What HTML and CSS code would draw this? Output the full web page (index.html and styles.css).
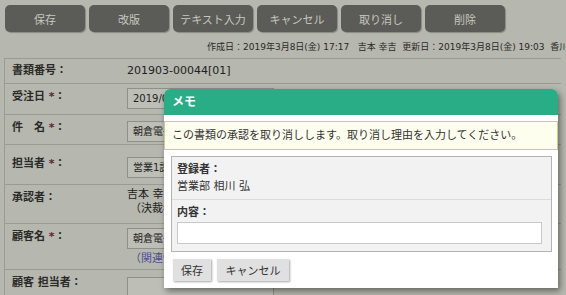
FILE: index.html
```html
<!DOCTYPE html>
<html lang="ja">
<head>
  <meta charset="UTF-8">
  <title>書類編集</title>
  <link rel="stylesheet" href="styles.css">
</head>
<body>
  <div class="toolbar">
    <button class="tool-btn">保存</button>
    <button class="tool-btn">改版</button>
    <button class="tool-btn">テキスト入力</button>
    <button class="tool-btn">キャンセル</button>
    <button class="tool-btn">取り消し</button>
    <button class="tool-btn">削除</button>
  </div>
  <div class="meta">作成日：2019年3月8日(金) 17:17&nbsp;&nbsp;&nbsp;吉本 幸吉&nbsp;&nbsp;更新日：2019年3月8日(金) 19:03&nbsp;&nbsp;香川 和夫</div>

  <div class="doc-table">
    <div class="row r1">
      <div class="label">書類番号：</div>
      <div class="value">201903-00044[01]</div>
    </div>
    <div class="row r2">
      <div class="label">受注日 <span class="req">*</span>：</div>
      <div class="value"><div class="field">2019/03/08</div></div>
    </div>
    <div class="row r3">
      <div class="label">件　名 <span class="req">*</span>：</div>
      <div class="value"><div class="field wide">朝倉電子工業株式会社 様 見積</div></div>
    </div>
    <div class="row r4">
      <div class="label">担当者 <span class="req">*</span>：</div>
      <div class="value"><div class="field">営業1課 香川 和夫</div></div>
    </div>
    <div class="row r5">
      <div class="label">承認者：</div>
      <div class="value">
        <div>吉本 幸吉</div>
        <div class="sub">（決裁者：吉本 幸吉）</div>
      </div>
    </div>
    <div class="row r6">
      <div class="label">顧客名 <span class="req">*</span>：</div>
      <div class="value">
        <div class="field wide">朝倉電子工業株式会社</div>
        <div class="sub link">（関連情報を表示）</div>
      </div>
    </div>
    <div class="row r7">
      <div class="label">顧客 担当者：</div>
      <div class="value"><div class="field"></div></div>
    </div>
  </div>

  <div class="modal">
    <div class="modal-head">メモ</div>
    <div class="notice">この書類の承認を取り消しします。取り消し理由を入力してください。</div>
    <div class="memo-box">
      <div class="memo-sec">
        <div class="memo-label">登録者：</div>
        <div>営業部 相川 弘</div>
      </div>
      <div class="memo-sec">
        <div class="memo-label">内容：</div>
        <input class="memo-input" type="text">
      </div>
    </div>
    <div class="modal-btns">
      <button class="btn">保存</button>
      <button class="btn">キャンセル</button>
    </div>
  </div>
</body>
</html>
```

FILE: styles.css
```css
body { margin: 0; background: #b6b7ae; font-family: "DejaVu Sans", "Noto Sans CJK JP", sans-serif; font-size: 11px; color: #222; overflow: hidden; height: 295px; position: relative; }

.toolbar { display: flex; gap: 4px; padding: 5px 0 0 5px; }
.tool-btn { width: 80px; height: 27px; border: none; border-radius: 5px; background: #5b5c57; color: #c6c7bf; font-family: inherit; font-size: 11px; box-shadow: 1px 1px 1px rgba(0,0,0,.25); padding: 0; }

.meta { margin: 8px 0 4px; padding-left: 207px; font-size: 9px; line-height: 14px; white-space: nowrap; overflow: hidden; color: #2a2a28; }

.doc-table { margin-left: 4px; margin-right: 5px; border-top: 1px solid #9a9b94; border-left: 1px solid #9a9b94; }
.row { display: grid; grid-template-columns: 122px 1fr; border-bottom: 1px solid #9a9b94; }
.label { padding: 4px 0 0 7px; line-height: 17px; font-weight: bold; color: #2a2a28; }
.req { color: #5a2436; }
.value { line-height: 17px; }
.field { width: 140px; height: 19px; border: 1px solid #8f908a; background: #bdbeb6; padding-left: 5px; line-height: 19px; font-size: 10px; overflow: hidden; white-space: nowrap; }
.sub { padding-left: 3px; }
.link { color: #4d4f93; }

.r1 { height: 24px; }
.r1 .label, .r1 .value { padding-top: 3px; }
.r2 { height: 30px; }
.r2 .value { padding-top: 4px; }
.r3 { height: 29px; }
.r3 .value { padding-top: 6px; }
.r4 { height: 39px; }
.r4 .label { padding-top: 10px; }
.r4 .value { padding-top: 12px; }
.r5 { height: 38px; }
.r5 .value { padding-top: 3px; line-height: 14px; }
.r6 { height: 45px; }
.r6 .value { padding-top: 4px; }
.r6 .sub { margin-top: 1px; }
.r7 { height: 25px; overflow: hidden; border-bottom: none; }
.r7 .value { padding-top: 7px; }

.modal { position: absolute; left: 164px; top: 89px; width: 394px; height: 199px; background: #fff; border-radius: 6px 6px 0 0; box-shadow: 2px 3px 6px rgba(0,0,0,.45); color: #333; }
.modal-head { height: 26px; line-height: 26px; padding-left: 8px; background: #29ad87; color: #fff; font-size: 12px; font-weight: bold; border-radius: 6px 6px 0 0; }
.notice { margin-top: 6px; height: 27px; line-height: 27px; border: 1px solid #cfc98a; background: #fefeee; padding-left: 7px; color: #333; }
.memo-box { margin: 6px 6px 0 7px; border: 1px solid #b3b3b3; background: #f2f2f2; }
.memo-sec { padding: 4px 9px 4px 5px; line-height: 17px; }
.memo-sec + .memo-sec { border-top: 1px solid #dcdcdc; padding-bottom: 7px; }
.memo-label { font-weight: bold; }
.memo-input { display: block; box-sizing: border-box; width: 100%; height: 22px; margin-top: 1px; border: 1px solid #c8c8c8; background: #fff; }
.modal-btns { display: flex; gap: 6px; padding: 7px 0 0 9px; }
.btn { height: 22px; padding: 0; border: none; background: #e0e0e0; color: #333; font-family: inherit; font-size: 11px; box-shadow: 1px 1px 2px rgba(0,0,0,.35); }
.btn:first-child { width: 38px; }
.btn:last-child { width: 72px; }
```
